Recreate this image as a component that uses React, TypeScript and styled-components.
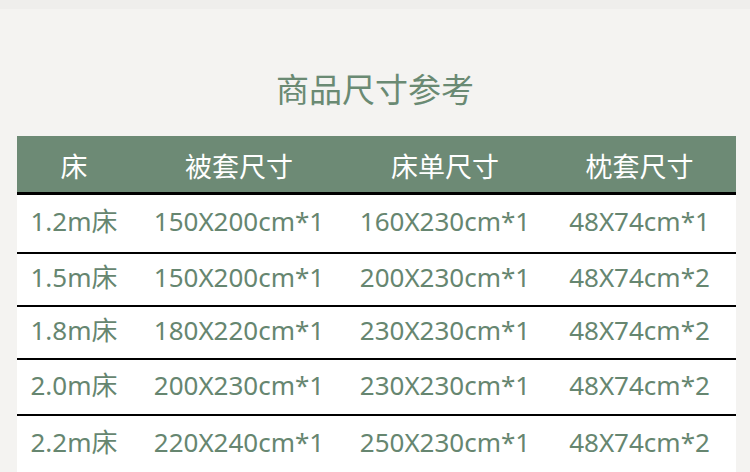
import React from "react";
import styled, { createGlobalStyle } from "styled-components";

const Global = createGlobalStyle`
  html, body { margin: 0; padding: 0; background: #f4f3f1; }
  body { font-family: "Noto Sans", "Noto Sans CJK SC", sans-serif; }
`;

const Page = styled.div`
  width: 750px;
  height: 472px;
  overflow: hidden;
  background: #f4f3f1;
`;

const TopStrip = styled.div`
  height: 9px;
  background: #efeeec;
`;

const Title = styled.h1`
  margin: 0;
  padding-top: 57px;
  height: 70px;
  text-align: center;
  font-family: "Noto Sans CJK SC", sans-serif;
  font-weight: 400;
  font-size: 33px;
  line-height: 44px;
  color: #6a8a73;
`;

const Table = styled.div`
  margin-left: 17px;
  width: 719px;
`;

const cols = "114px 216px 196px 193px";

const HeaderRow = styled.div`
  display: grid;
  grid-template-columns: ${cols};
  height: 56px;
  background: #6d8a75;
  border-bottom: 3px solid #000;
  align-items: center;
`;

const HeaderCell = styled.div`
  text-align: center;
  color: #ffffff;
  font-family: "Noto Sans CJK SC", sans-serif;
  font-size: 27px;
  font-weight: 400;
  line-height: 1;
  padding-top: 2px;
`;

const Row = styled.div<{ $h: number; $last?: boolean }>`
  display: grid;
  grid-template-columns: ${cols};
  height: ${(p) => p.$h}px;
  background: #ffffff;
  border-bottom: ${(p) => (p.$last ? "none" : "2px solid #000")};
  align-items: center;
`;

const Cell = styled.div`
  text-align: center;
  color: #668670;
  font-size: 26px;
  line-height: 1;
  white-space: nowrap;
  padding-bottom: 5px;
`;

const rows = [
  { bed: "1.2m床", duvet: "150X200cm*1", sheet: "160X230cm*1", pillow: "48X74cm*1", h: 57 },
  { bed: "1.5m床", duvet: "150X200cm*1", sheet: "200X230cm*1", pillow: "48X74cm*2", h: 51 },
  { bed: "1.8m床", duvet: "180X220cm*1", sheet: "230X230cm*1", pillow: "48X74cm*2", h: 51 },
  { bed: "2.0m床", duvet: "200X230cm*1", sheet: "230X230cm*1", pillow: "48X74cm*2", h: 54 },
  { bed: "2.2m床", duvet: "220X240cm*1", sheet: "250X230cm*1", pillow: "48X74cm*2", h: 56 },
];

export default function App() {
  return (
    <Page>
      <Global />
      <TopStrip />
      <Title>商品尺寸参考</Title>
      <Table>
        <HeaderRow>
          <HeaderCell>床</HeaderCell>
          <HeaderCell>被套尺寸</HeaderCell>
          <HeaderCell>床单尺寸</HeaderCell>
          <HeaderCell>枕套尺寸</HeaderCell>
        </HeaderRow>
        {rows.map((r, i) => (
          <Row key={r.bed} $h={r.h} $last={i === rows.length - 1}>
            <Cell>{r.bed}</Cell>
            <Cell>{r.duvet}</Cell>
            <Cell>{r.sheet}</Cell>
            <Cell>{r.pillow}</Cell>
          </Row>
        ))}
      </Table>
    </Page>
  );
}
